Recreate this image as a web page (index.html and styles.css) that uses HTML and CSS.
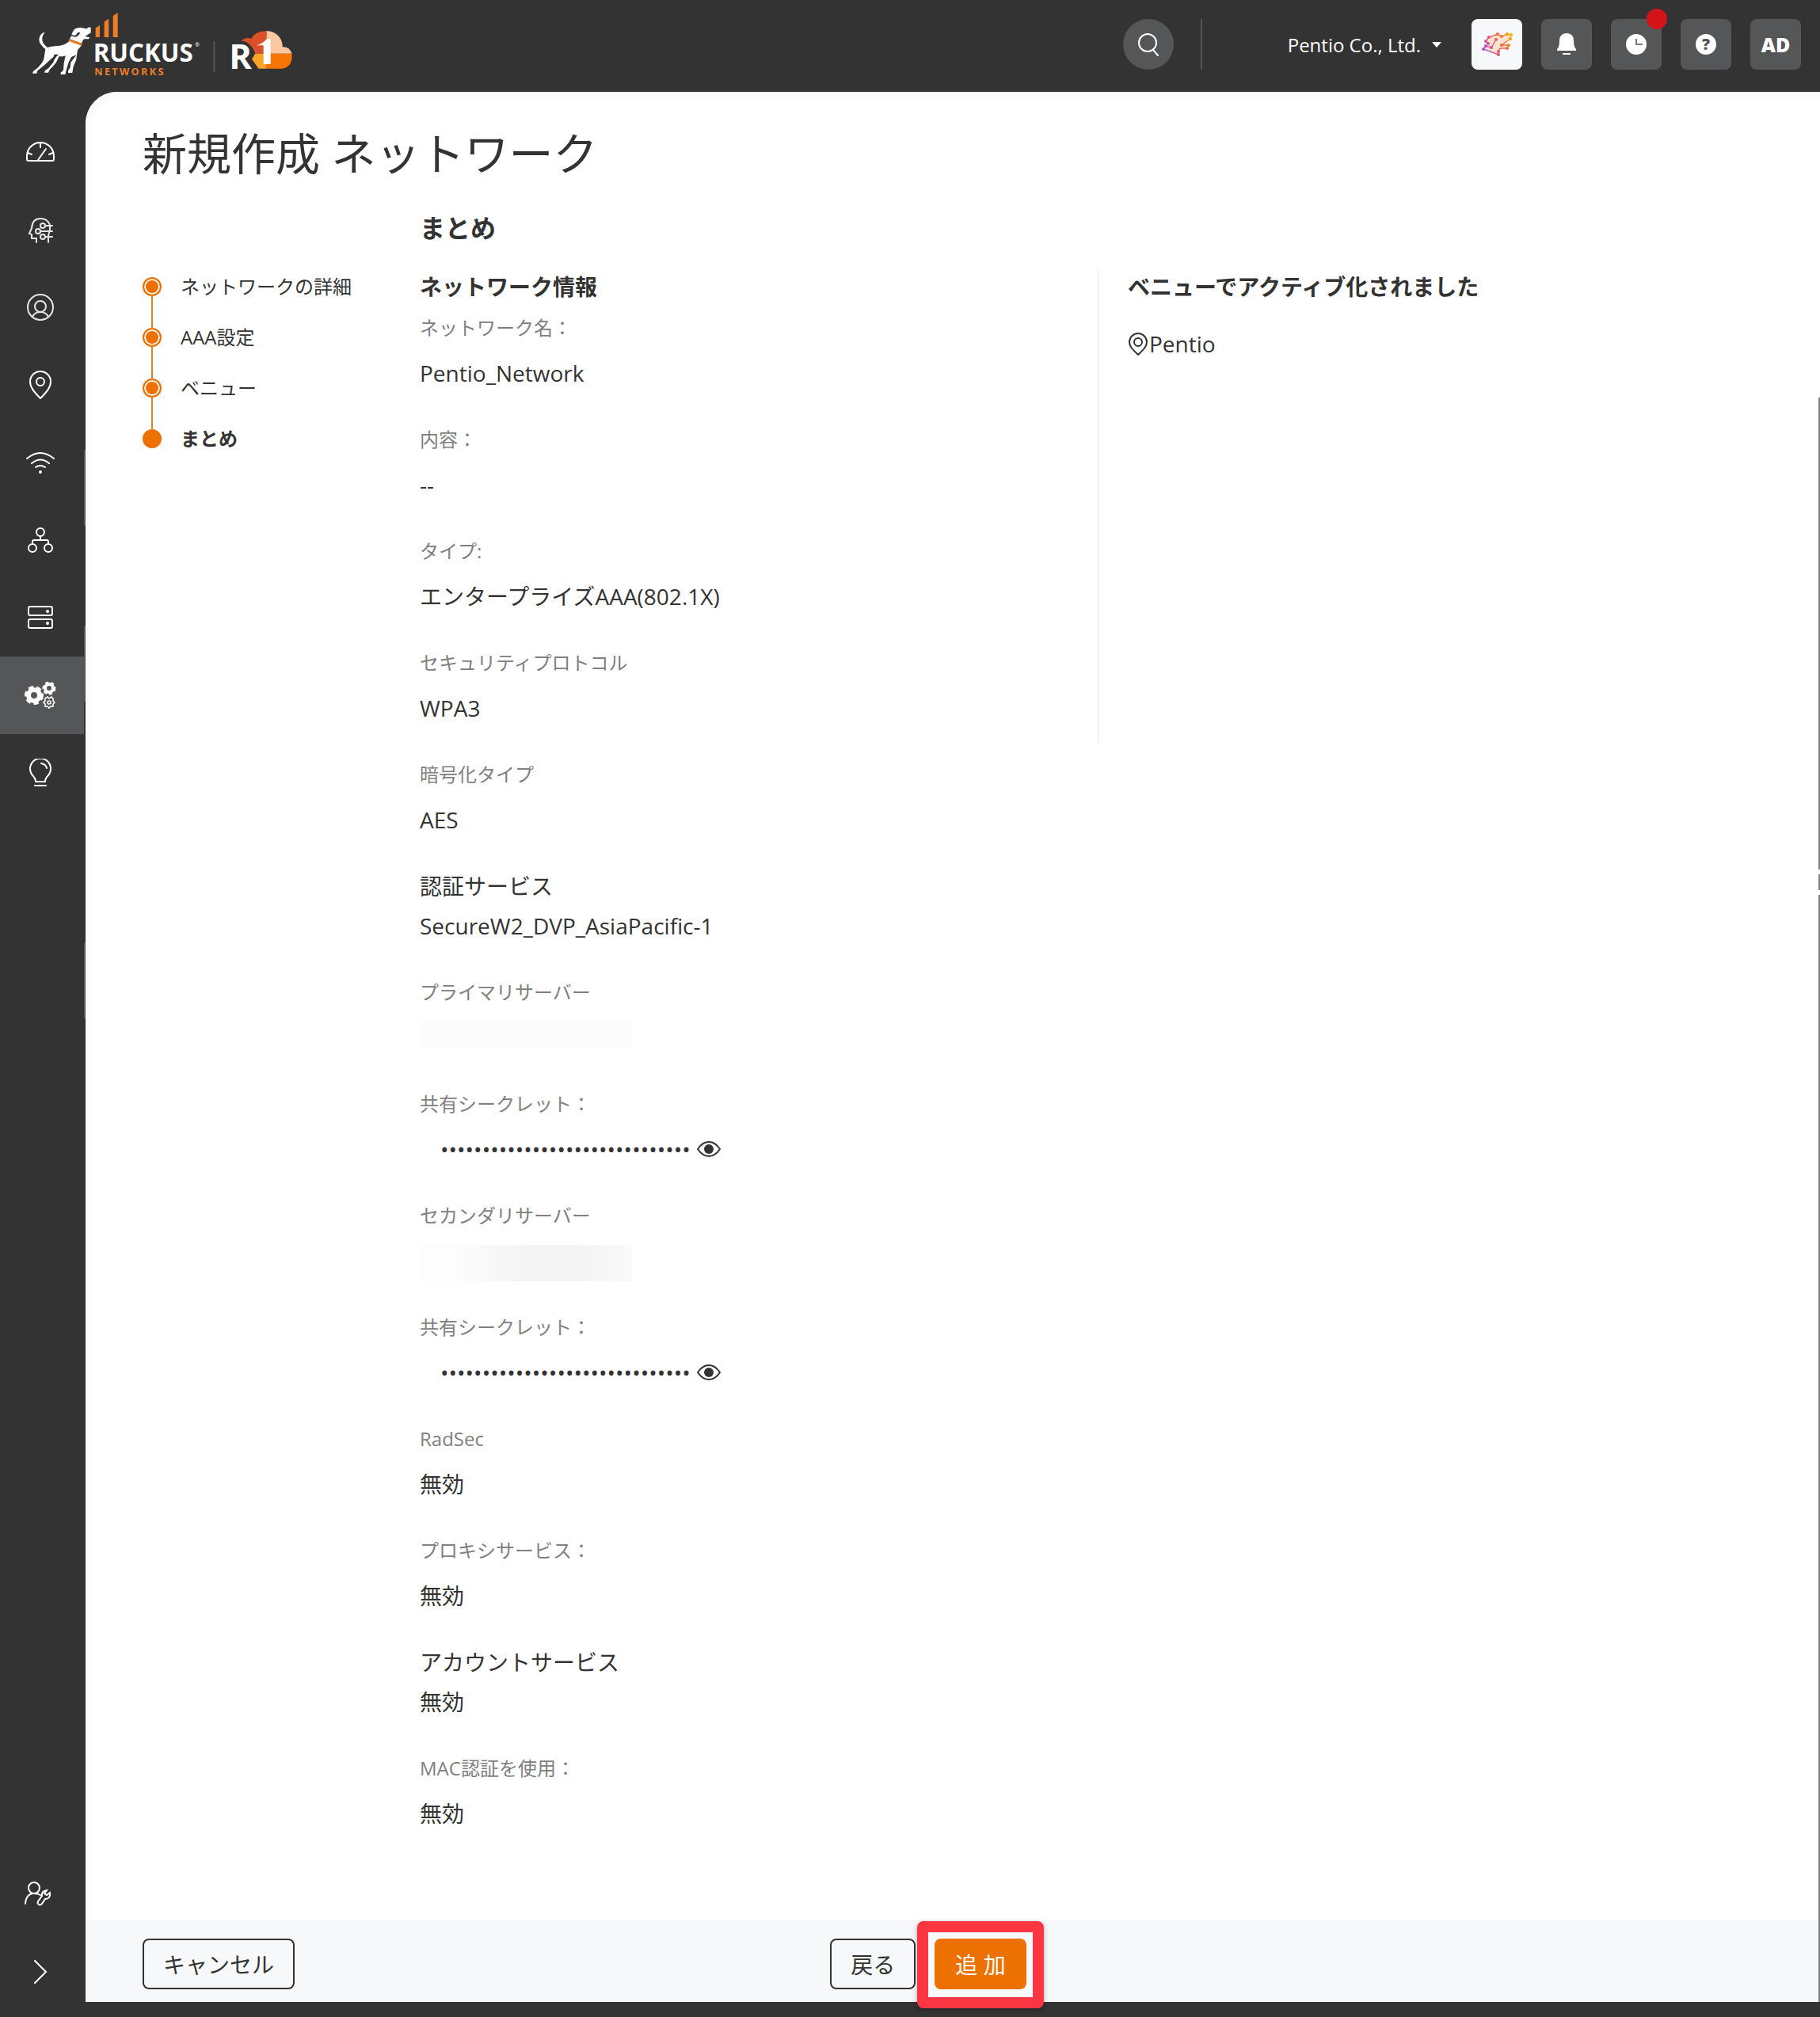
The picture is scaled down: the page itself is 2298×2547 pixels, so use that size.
FILE: index.html
```html
<!DOCTYPE html>
<html lang="ja">
<head>
    <meta charset="UTF-8">
    <meta name="viewport" content="width=device-width, initial-scale=1.0">
    <title>新規作成 ネットワーク</title>
    <link rel="stylesheet" href="styles.css">
</head>
<body>
    <header class="topbar">
        <a class="brand" href="#" aria-label="RUCKUS Networks">
            <svg width="370" height="100" viewBox="0 0 1110 300">
                <!-- dog -->
                <path fill="#fff" d="M128 122 C108 126 100 150 112 168 Q122 180 130 186 L124 224 Q118 240 102 256 L84 270 L81 278 H97 L100 268 Q124 250 140 234 L162 214 Q160 206 166 206 L180 206 Q164 220 160 236 L142 258 L128 268 L126 275 H141 L146 264 Q170 240 174 230 L182 213 Q196 216 206 211 L200 240 L198 266 L188 275 L188 282 H205 L210 262 L218 236 L228 216 L248 208 L226 236 L224 256 L216 268 L216 276 H232 L236 252 L246 228 L252 190 L268 170 L222 154 Q206 172 178 174 Q150 176 138 180 Q122 168 119 156 Q114 140 128 122 Z"/>
                <path fill="#fff" d="M222 148 L268 164 Q270 154 276 148 L294 148 L298 142 L280 138 L302 124 L302 106 L296 102 L286 109 L262 104 Q240 106 236 116 L229 130 Q238 138 246 132 L254 122 L262 124 Q254 140 242 140 L228 136 Z"/>
                <path stroke="#f07d25" stroke-width="9" d="M219 152 L267 169"/>
                <!-- signal bars -->
                <path fill="#f07d25" d="M320 141 V106 L336 96 V141 Z M353 141 V82 L370 71 V141 Z M386 141 V60 L404 48 V141 Z"/>
                <text x="311" y="235" class="logo-name">RUCKUS</text>
                <text x="697" y="178" class="logo-mark">®</text>
                <text x="316" y="286" class="logo-sub">NETWORKS</text>
                <path stroke="#555657" stroke-width="6" d="M769 156 V272"/>
                <!-- cloud -->
                <path fill="#d9502b" d="M872 155 Q886 140 910 146 Q924 118 968 117 V203 H925 Q916 176 898 164 Q888 154 872 155 Z"/>
                <path fill="#fbc7a0" d="M968 117 C1004 118 1030 146 1028 178 Q1054 176 1064 203 H968 Z"/>
                <path fill="#fba428" d="M925 203 H968 V260 H938 L912 224 Z"/>
                <path fill="#f57600" d="M968 203 H1063 C1068 238 1050 260 1020 260 H968 Z"/>
                <text x="826" y="260" class="logo-r">R</text>
                <path fill="#fff" d="M930 172 Q956 164 968 148 H983 V243 H956 V172 Z"/>
            </svg>
        </a>

        <div class="topbar-tools">
            <button class="search" type="button" aria-label="検索">
                <svg width="32" height="32" viewBox="0 0 32 32" class="line"><circle cx="15" cy="14" r="11"/><path d="M22 23 L28 30"/></svg>
            </button>
            <span class="separator"></span>
            <button class="tenant" type="button">Pentio Co., Ltd.<span class="caret"></span></button>
            <div class="actions">
                <button class="action action-light" type="button" aria-label="アシスタント">
                    <svg width="41" height="32" viewBox="0 0 41 32">
                        <defs>
                            <linearGradient id="pup" gradientUnits="userSpaceOnUse" x1="3" y1="26" x2="38" y2="4">
                                <stop offset="0" stop-color="#9b51f5"/>
                                <stop offset="0.4" stop-color="#e8546c"/>
                                <stop offset="0.7" stop-color="#f2703c"/>
                                <stop offset="1" stop-color="#f5b400"/>
                            </linearGradient>
                        </defs>
                        <path fill="#fde3cf" d="M6 18 L9 15 L6 12 L10 7 L21 3 L26 6 L33 3 L38 4 L37 9 L26 17 L35 17 L33 21 L24 21 L22 29 L3 22 Z"/>
                        <path fill="none" stroke="url(#pup)" stroke-width="1.4" d="M19 10 L13 20 L6 18 L3 22 L22 29 L22 25 L24 21 L33 21 L35 17 L26 17 L37 9 L38 4 L33 3 L26 6 L21 3 L10 7 L6 12 L9 15"/>
                        <g fill="url(#pup)">
                            <circle cx="3" cy="22" r="2"/><circle cx="22" cy="29" r="2"/><circle cx="6" cy="18" r="2"/>
                            <circle cx="13" cy="20" r="2"/><circle cx="19" cy="10" r="2"/><circle cx="9" cy="15" r="2"/>
                            <circle cx="6" cy="12" r="2"/><circle cx="10" cy="7" r="2"/><circle cx="21" cy="3" r="2"/>
                            <circle cx="26" cy="6" r="2"/><circle cx="33" cy="3" r="2"/><circle cx="38" cy="4" r="2"/>
                            <circle cx="37" cy="9" r="2"/><circle cx="26" cy="17" r="2"/><circle cx="35" cy="17" r="2"/>
                            <circle cx="33" cy="21" r="2"/><circle cx="22" cy="25" r="2"/>
                        </g>
                    </svg>
                </button>
                <button class="action" type="button" aria-label="通知">
                    <svg width="26" height="28" viewBox="0 0 26 28" fill="#fff"><path d="M13 0 C7 0 4 4 4 9 C4 15 3 18 1 20 V22 H25 V20 C23 18 22 15 22 9 C22 4 19 0 13 0 Z M8 25 H18 V27 H8 Z"/></svg>
                </button>
                <button class="action" type="button" aria-label="アクティビティ">
                    <svg width="26" height="26" viewBox="0 0 26 26"><circle cx="13" cy="13" r="13" fill="#fff"/><path d="M13 6 V13 H21" fill="none" stroke="#555657" stroke-width="1.6"/></svg>
                    <span class="badge"></span>
                </button>
                <button class="action" type="button" aria-label="ヘルプ">
                    <span class="help">?</span>
                </button>
                <button class="action" type="button">AD</button>
            </div>
        </div>
    </header>

    <div class="shell">
        <nav class="sidebar" aria-label="メニュー">
            <a class="nav-item" href="#" aria-label="ダッシュボード">
                <svg width="36" height="36" viewBox="0 0 36 36" class="line"><path d="M3 29 Q1 29 1 27 V23 A17 17 0 0 1 35 23 V27 Q35 29 33 29 Z M18 7 V12 M2 19 L7 21 M34 19 L29 21 M15 28 L25 14"/></svg>
            </a>
            <a class="nav-item" href="#" aria-label="AI">
                <svg width="36" height="36" viewBox="0 0 36 36" class="line line-thin"><path d="M13 34 V29 H7 V24 L4 23 L7 16 Q8 4 18 4 Q27 4 30 12 L30 18 L28 26 V34 M24 13 H33 M18 20 H33 M24 27 H33"/><circle cx="21" cy="13" r="3"/><circle cx="15" cy="20" r="3"/><circle cx="21" cy="27" r="3"/></svg>
            </a>
            <a class="nav-item" href="#" aria-label="クライアント">
                <svg width="36" height="36" viewBox="0 0 36 36" class="line line-thin"><circle cx="18" cy="18" r="16"/><circle cx="18" cy="17" r="7"/><path d="M8 30 Q11 24 18 24 Q25 24 28 30"/></svg>
            </a>
            <a class="nav-item" href="#" aria-label="ベニュー">
                <svg width="36" height="36" viewBox="0 0 36 36" class="line"><path d="M18 35 C10 27 5 21 5 14 A13 13 0 0 1 31 14 C31 21 26 27 18 35 Z"/><circle cx="18" cy="14" r="5"/></svg>
            </a>
            <a class="nav-item" href="#" aria-label="Wi-Fi">
                <svg width="36" height="36" viewBox="0 0 36 36" class="line"><path d="M1 13 Q18 -1 35 13 M7 19 Q18 10 29 19 M12 24 Q18 20 24 24"/><circle cx="18" cy="30" r="1"/></svg>
            </a>
            <a class="nav-item" href="#" aria-label="有線">
                <svg width="36" height="36" viewBox="0 0 36 36" class="line"><circle cx="18" cy="8" r="5"/><circle cx="8" cy="28" r="5"/><circle cx="28" cy="28" r="5"/><path d="M18 13 V18 M8 23 V20 Q8 18 10 18 H26 Q28 18 28 20 V23"/></svg>
            </a>
            <a class="nav-item" href="#" aria-label="サーバー">
                <svg width="36" height="36" viewBox="0 0 36 36" class="line"><rect x="3" y="4" width="30" height="11" rx="2"/><rect x="3" y="20" width="30" height="11" rx="2"/><circle cx="27" cy="10" r="1"/><circle cx="27" cy="25" r="1"/></svg>
            </a>
            <a class="nav-item nav-item-active" href="#" aria-label="ネットワーク制御">
                <svg width="40" height="36" viewBox="0 0 40 36">
                    <circle cx="12" cy="18" r="7" fill="none" stroke="#fff" stroke-width="6"/>
                    <circle cx="12" cy="18" r="10" fill="none" stroke="#fff" stroke-width="4" stroke-dasharray="6 4"/>
                    <circle cx="31" cy="9" r="5" fill="none" stroke="#fff" stroke-width="4"/>
                    <circle cx="31" cy="9" r="7" fill="none" stroke="#fff" stroke-width="3" stroke-dasharray="4 3"/>
                    <path fill="none" stroke="#fff" stroke-width="1.6" d="M29 20 L31 22 L34 20 L36 22 L36 25 L38 27 L36 29 L36 32 L33 32 L31 34 L29 32 L26 32 L26 29 L24 27 L26 25 L26 22 Z"/>
                    <circle cx="31" cy="27" r="2" fill="none" stroke="#fff" stroke-width="1.6"/>
                </svg>
            </a>
            <a class="nav-item" href="#" aria-label="ヒント">
                <svg width="36" height="36" viewBox="0 0 36 36" class="line"><path d="M12 29 Q12 25 8 21 A13 13 0 1 1 28 21 Q24 25 24 29 Z M11 34 H25 M19 6 Q25 7 26 12"/></svg>
            </a>

            <div class="sidebar-bottom">
                <a class="nav-item nav-item-admin" href="#" aria-label="管理">
                    <svg width="36" height="36" viewBox="0 0 36 36" class="line"><circle cx="14" cy="11" r="7"/><path d="M3 31 Q4 18 14 18 Q19 18 22 20 M19 28 L24 21 Q23 15 30 14 L27 18 L30 20 L34 17 Q35 25 28 25 L24 31 Q21 34 19 31 Q18 30 19 28 Z"/></svg>
                </a>
                <button class="expand" type="button" aria-label="展開">
                    <svg width="20" height="32" viewBox="0 0 20 32" class="line"><path d="M3 2 L17 16 L3 30"/></svg>
                </button>
            </div>
            <span class="edge edge-1"></span>
            <span class="edge edge-2"></span>
            <span class="edge edge-3"></span>
        </nav>

        <main class="page">
            <div class="content">
                <h1>新規作成 ネットワーク</h1>
                <div class="wizard">
                    <ol class="steps">
                        <li class="step">ネットワークの詳細</li>
                        <li class="step">AAA設定</li>
                        <li class="step">ベニュー</li>
                        <li class="step step-current">まとめ</li>
                    </ol>

                    <div class="summary">
                        <h2>まとめ</h2>
                        <div class="columns">
                            <section class="info">
                                <h3>ネットワーク情報</h3>
                                <div class="field">
                                    <div class="label">ネットワーク名：</div>
                                    <div class="value">Pentio_Network</div>
                                </div>
                                <div class="field">
                                    <div class="label">内容：</div>
                                    <div class="value">--</div>
                                </div>
                                <div class="field">
                                    <div class="label">タイプ:</div>
                                    <div class="value">エンタープライズAAA(802.1X)</div>
                                </div>
                                <div class="field">
                                    <div class="label">セキュリティプロトコル</div>
                                    <div class="value">WPA3</div>
                                </div>
                                <div class="field">
                                    <div class="label">暗号化タイプ</div>
                                    <div class="value">AES</div>
                                </div>
                                <div class="field service">
                                    <h4>認証サービス</h4>
                                    <div class="value">SecureW2_DVP_AsiaPacific-1</div>
                                </div>
                                <div class="field">
                                    <div class="label">プライマリサーバー</div>
                                    <div class="value value-masked"><span class="masked masked-faint"></span></div>
                                </div>
                                <div class="field">
                                    <label class="label" for="secret1">共有シークレット：</label>
                                    <div class="value secret">
                                        <input type="password" id="secret1" value="012345678901234567890123456789" readonly>
                                        <button class="eye" type="button" aria-label="表示">
                                            <svg width="32" height="24" viewBox="0 0 32 24"><path d="M2 12 Q8 3 16 3 Q24 3 30 12 Q24 21 16 21 Q8 21 2 12 Z" fill="none" stroke="#333" stroke-width="2"/><circle cx="16" cy="12" r="6" fill="#333"/></svg>
                                        </button>
                                    </div>
                                </div>
                                <div class="field">
                                    <div class="label">セカンダリサーバー</div>
                                    <div class="value value-masked"><span class="masked"></span></div>
                                </div>
                                <div class="field">
                                    <label class="label" for="secret2">共有シークレット：</label>
                                    <div class="value secret">
                                        <input type="password" id="secret2" value="012345678901234567890123456789" readonly>
                                        <button class="eye" type="button" aria-label="表示">
                                            <svg width="32" height="24" viewBox="0 0 32 24"><path d="M2 12 Q8 3 16 3 Q24 3 30 12 Q24 21 16 21 Q8 21 2 12 Z" fill="none" stroke="#333" stroke-width="2"/><circle cx="16" cy="12" r="6" fill="#333"/></svg>
                                        </button>
                                    </div>
                                </div>
                                <div class="field">
                                    <div class="label">RadSec</div>
                                    <div class="value">無効</div>
                                </div>
                                <div class="field">
                                    <div class="label">プロキシサービス：</div>
                                    <div class="value">無効</div>
                                </div>
                                <div class="field service">
                                    <h4>アカウントサービス</h4>
                                    <div class="value">無効</div>
                                </div>
                                <div class="field">
                                    <div class="label">MAC認証を使用：</div>
                                    <div class="value">無効</div>
                                </div>
                            </section>

                            <section class="venues">
                                <h3>ベニューでアクティブ化されました</h3>
                                <div class="venue">
                                    <svg width="27" height="30" viewBox="0 0 27 30" fill="none" stroke="#333" stroke-width="2"><path d="M13 29 C7 23 2 19 2 13 A11 11 0 0 1 24 13 C24 19 19 23 13 29 Z"/><circle cx="13" cy="13" r="5"/></svg>
                                    <span>Pentio</span>
                                </div>
                            </section>
                        </div>
                    </div>
                </div>
            </div>

            <footer class="footer">
                <div><button class="btn" type="button">キャンセル</button></div>
                <div class="footer-main">
                    <button class="btn" type="button">戻る</button>
                    <div class="highlight">
                        <button class="btn btn-primary" type="submit">追 加</button>
                    </div>
                </div>
            </footer>
            <div class="scroll-edge"><span></span><span></span><span></span></div>
        </main>
    </div>
</body>
</html>
```

FILE: styles.css
```css
/* Reset and Base Styles */
* {
    margin: 0;
    padding: 0;
    box-sizing: border-box;
}

body {
    font-family: "Open Sans", "Noto Sans CJK JP", sans-serif;
    font-size: 28px;
    color: #333;
    background-color: #333;
    min-height: 100vh;
    display: flex;
    flex-direction: column;
}

button {
    font-family: inherit;
    border: none;
    background: none;
    color: inherit;
    cursor: pointer;
}

svg {
    display: block;
    flex: none;
}

.line {
    fill: none;
    stroke: #fff;
    stroke-width: 2;
    stroke-linecap: round;
}

.line-thin {
    stroke: #e6e6e6;
}

/* Top bar */
.topbar {
    height: 116px;
    padding: 0 24px 0 14px;
    display: flex;
    justify-content: space-between;
    color: #fff;
}

.logo-name {
    font-size: 94px;
    font-weight: 700;
    fill: #fff;
}

.logo-mark {
    font-size: 20px;
    fill: #fff;
}

.logo-sub {
    font-size: 38px;
    font-weight: 700;
    letter-spacing: 7px;
    fill: #f07d25;
}

.logo-r {
    font-size: 130px;
    font-weight: 700;
    fill: #fff;
    stroke: #333;
    stroke-width: 14px;
    paint-order: stroke;
}

.topbar-tools {
    display: flex;
    align-items: center;
    height: 112px;
}

.search {
    width: 64px;
    height: 64px;
    border-radius: 50%;
    background-color: #555657;
    display: flex;
    align-items: center;
    justify-content: center;
}

.separator {
    width: 2px;
    height: 64px;
    margin: 0 108px 0 34px;
    background-color: #555657;
}

.tenant {
    display: flex;
    align-items: center;
    gap: 14px;
    font-size: 24px;
}

.caret {
    border: 6px solid transparent;
    border-top: 7px solid #fff;
    border-bottom: none;
}

.actions {
    display: flex;
    gap: 24px;
    margin-left: 38px;
}

.action {
    position: relative;
    width: 64px;
    height: 64px;
    border-radius: 8px;
    background-color: #555657;
    display: flex;
    align-items: center;
    justify-content: center;
    font-family: "Open Sans", sans-serif;
    font-size: 25px;
    font-weight: 800;
}

.action-light {
    background-color: #f7f8fa;
}

.badge {
    position: absolute;
    top: -13px;
    right: -7px;
    width: 26px;
    height: 26px;
    border-radius: 50%;
    background-color: #d51419;
}

.help {
    width: 26px;
    height: 26px;
    border-radius: 50%;
    background-color: #fff;
    color: #555657;
    font-size: 20px;
    line-height: 26px;
}

/* Layout */
.shell {
    flex: 1;
    display: flex;
    padding-bottom: 19px;
}

.sidebar {
    position: relative;
    width: 108px;
    padding-top: 27px;
    display: flex;
    flex-direction: column;
}

.nav-item {
    height: 98px;
    width: 106px;
    padding-right: 4px;
    display: flex;
    align-items: center;
    justify-content: center;
}

.nav-item-active {
    background-color: #555657;
}

.sidebar-bottom {
    margin-top: auto;
}

.nav-item-admin {
    padding-right: 12px;
}

.expand {
    width: 102px;
    height: 88px;
    padding-top: 12px;
    display: flex;
    align-items: center;
    justify-content: center;
}

.edge {
    position: absolute;
    right: 0;
    width: 2px;
    height: 96px;
    background-color: #555657;
}

.edge-1 {
    top: 452px;
}

.edge-2 {
    top: 674px;
}

.edge-3 {
    top: 1074px;
}

/* Page */
.page {
    position: relative;
    flex: 1;
    display: flex;
    flex-direction: column;
    background-color: #fff;
    border-top-left-radius: 40px;
    box-shadow: inset 6px 6px 8px #fafafa;
}

.content {
    flex: 1;
    padding: 37px 56px 0 72px;
}

h1 {
    font-size: 56px;
    font-weight: 400;
    line-height: 80px;
}

.wizard {
    display: flex;
    margin-top: 31px;
}

/* Steps */
.steps {
    list-style: none;
    flex: none;
    width: 350px;
    padding-top: 82px;
}

.step {
    position: relative;
    height: 64px;
    padding-left: 48px;
    font-size: 24px;
    line-height: 32px;
}

.step::before {
    content: "";
    position: absolute;
    z-index: 1;
    left: 0;
    top: 4px;
    width: 20px;
    height: 20px;
    border-radius: 50%;
    border: 2px solid #ec7100;
    background-color: #ec7100;
    box-shadow: inset 0 0 0 2px #fff;
}

.step::after {
    content: "";
    position: absolute;
    left: 11px;
    top: 28px;
    width: 2px;
    height: 40px;
    background-color: #de861b;
}

.step-current {
    font-weight: 700;
}

.step-current::before {
    box-shadow: none;
}

.step-current::after {
    display: none;
}

/* Summary */
.summary {
    flex: 1;
}

h2 {
    font-size: 32px;
    font-weight: 700;
    line-height: 48px;
    margin-bottom: 28px;
}

.columns {
    display: grid;
    grid-template-columns: 1fr 1fr;
    align-items: start;
}

h3 {
    font-size: 28px;
    font-weight: 700;
    line-height: 44px;
}

.info h3 {
    margin-bottom: 10px;
}

.field {
    margin-bottom: 40px;
}

.label {
    display: block;
    font-size: 24px;
    line-height: 40px;
    color: #808080;
    margin-bottom: 13px;
}

.value {
    height: 48px;
    line-height: 48px;
}

.service {
    margin-top: 42px;
}

.service h4 {
    font-size: 28px;
    font-weight: 400;
    line-height: 36px;
    margin-bottom: 8px;
}

.secret {
    display: flex;
    align-items: center;
}

.secret input {
    width: 349px;
    padding-left: 26px;
    border: none;
    outline: none;
    background: none;
    font-family: "Open Sans", sans-serif;
    font-size: 28px;
    color: #333;
}

.value-masked {
    padding-top: 4px;
}

.masked {
    display: block;
    width: 268px;
    height: 46px;
    background: linear-gradient(to right, #fdfdfd 15%, #f4f4f4 50%, #f4f4f4 75%, #fafafa);
}

.masked-faint {
    height: 32px;
    background: #fcfcfc;
}

.venues {
    min-height: 598px;
    padding-left: 36px;
    border-left: 2px solid #f2f2f2;
}

.venue {
    display: flex;
    align-items: center;
    margin-top: 26px;
    line-height: 48px;
}

/* Footer */
.footer {
    height: 104px;
    padding: 8px 134px 0 72px;
    display: grid;
    grid-template-columns: 1fr auto 1fr;
    align-items: center;
    background-color: #f7f8fa;
}

.footer-main {
    display: flex;
    gap: 24px;
}

.btn {
    height: 64px;
    padding: 0 24px;
    border: 2px solid #333;
    border-radius: 8px;
    font-size: 28px;
}

.btn-primary {
    background-color: #ec7100;
    border-color: #ec7100;
    color: #fff;
}

.highlight {
    position: relative;
}

/* Red frame drawn over the submit button */
.highlight::after {
    content: "";
    position: absolute;
    inset: -22px -22px -24px;
    border: 14px solid #fc3543;
    border-radius: 8px;
    box-shadow: 0 2px 6px rgba(0, 0, 0, 0.3);
    pointer-events: none;
}

/* Thin strip on the right edge */
.scroll-edge {
    position: absolute;
    top: 386px;
    right: 0;
    bottom: 0;
    width: 2px;
    display: flex;
    flex-direction: column;
    gap: 6px;
}

.scroll-edge span {
    background-color: #808080;
    height: 20px;
}

.scroll-edge span:first-child {
    height: 596px;
}

.scroll-edge span:last-child {
    flex: 1;
}
```
